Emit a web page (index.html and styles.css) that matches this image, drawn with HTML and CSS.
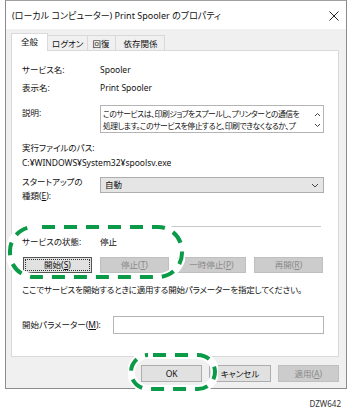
FILE: index.html
```html
<!DOCTYPE html>
<html lang="ja">

<head>
    <meta charset="UTF-8">
    <meta name="viewport" content="width=device-width, initial-scale=1.0">
    <title>Print Spooler のプロパティ</title>
    <link rel="stylesheet" href="styles.css">
</head>

<body>
    <div class="window">
        <!-- タイトルバー -->
        <div class="titlebar">
            <span class="title">(ローカル コンピューター) Print Spooler のプロパティ</span>
            <svg class="close" width="10" height="10" viewBox="0 0 10 10">
                <path d="M0.5 0.5 L9.5 9.5 M9.5 0.5 L0.5 9.5" stroke="#222" stroke-width="1" fill="none" />
            </svg>
        </div>

        <div class="frame">
            <div class="tabs">
                <div class="tab active">全般</div>
                <div class="tab">ログオン</div>
                <div class="tab">回復</div>
                <div class="tab">依存関係</div>
            </div>

            <div class="panel">
                <div class="row r-name">
                    <span class="label">サービス名:</span>
                    <span>Spooler</span>
                </div>
                <div class="row r-display">
                    <span class="label">表示名:</span>
                    <span>Print Spooler</span>
                </div>
                <div class="row r-desc">
                    <span class="label">説明:</span>
                    <div class="desc">
                        <div class="desc-text">このサービスは、印刷ジョブをスプールし、プリンターとの通信を<br>処理します。このサービスを停止すると、印刷できなくなるか、プ</div>
                        <div class="scroll">
                            <svg width="7" height="5" viewBox="0 0 7 5"><path d="M1 4 L3.5 1.5 L6 4" stroke="#444" fill="none" /></svg>
                            <svg width="7" height="5" viewBox="0 0 7 5"><path d="M1 1 L3.5 3.5 L6 1" stroke="#444" fill="none" /></svg>
                        </div>
                    </div>
                </div>
                <div class="row r-path-label">実行ファイルのパス:</div>
                <div class="row r-path">C:¥WINDOWS¥System32¥spoolsv.exe</div>
                <div class="row r-startup">
                    <span class="label">スタートアップの<br>種類(<u>E</u>):</span>
                    <div class="select">
                        <span>自動</span>
                        <svg width="8" height="5" viewBox="0 0 8 5"><path d="M1 1 L4 4 L7 1" stroke="#444" fill="none" /></svg>
                    </div>
                </div>
                <div class="separator"></div>
                <div class="row r-status">
                    <span class="label">サービスの状態:</span>
                    <span>停止</span>
                </div>
                <div class="buttons">
                    <button class="btn focus">開始(<u>S</u>)</button>
                    <button class="btn disabled">停止(<u>T</u>)</button>
                    <button class="btn disabled">一時停止(<u>P</u>)</button>
                    <button class="btn disabled">再開(<u>R</u>)</button>
                </div>
                <div class="row r-hint">ここでサービスを開始するときに適用する開始パラメーターを指定してください。</div>
                <div class="row r-param">
                    <span class="label wide">開始パラメーター(<u>M</u>):</span>
                    <div class="input"></div>
                </div>
            </div>

            <div class="actions">
                <button class="btn">OK</button>
                <button class="btn">キャンセル</button>
                <button class="btn disabled">適用(<u>A</u>)</button>
            </div>
        </div>
    </div>

    <div class="code">DZW642</div>

    <!-- 強調枠 -->
    <svg class="mark mark-status" width="178" height="56" viewBox="0 0 178 56">
        <rect x="3" y="3" width="172" height="50" rx="24" fill="none" stroke="#fff" stroke-width="8" />
        <rect x="3" y="3" width="172" height="50" rx="24" fill="none" stroke="#0b9a47" stroke-width="4" stroke-dasharray="13 9" stroke-dashoffset="-30" />
    </svg>
    <svg class="mark mark-ok" width="90" height="40" viewBox="0 0 90 40">
        <rect x="3" y="3" width="84" height="34" rx="17" fill="none" stroke="#fff" stroke-width="8" />
        <rect x="3" y="3" width="84" height="34" rx="17" fill="none" stroke="#0b9a47" stroke-width="4" stroke-dasharray="13 9" stroke-dashoffset="-5" />
    </svg>
</body>

</html>
```

FILE: styles.css
```css
body {
    margin: 0;
    background: #fff;
    font-family: "Noto Sans", "Noto Sans CJK JP", sans-serif;
    font-size: 8.5px;
    font-feature-settings: "palt";
    color: #111;
    position: relative;
    width: 350px;
    height: 411px;
    overflow: hidden;
}

.window {
    margin-left: 5px;
    width: 340px;
    border: 1px solid #8c8c8c;
    border-top-color: #a0a0a0;
}

.titlebar {
    height: 28px;
    background: #fff;
    display: flex;
    align-items: center;
    padding-left: 6px;
    padding-right: 7px;
}

.title {
    font-size: 9px;
    flex: 1;
}

.close {
    margin-top: 1px;
}

.frame {
    background: #f0f0f0;
    padding: 4px 7px 6px 5px;
}

.tabs {
    display: flex;
    align-items: flex-end;
    height: 17px;
    position: relative;
    z-index: 1;
}

.tab {
    height: 15px;
    line-height: 15px;
    padding: 0 4px;
    white-space: nowrap;
    border: 1px solid #d9d9d9;
    border-bottom: none;
    border-left: none;
    background: #f0f0f0;
    box-sizing: border-box;
}

.tab.active {
    height: 18px;
    line-height: 16px;
    margin-bottom: -1px;
    width: 37px;
    text-align: center;
    background: #fff;
    border-left: 1px solid #d9d9d9;
    padding: 0;
}

.tab:nth-child(3) {
    padding: 0 6px 0 4px;
}

.tab:nth-child(4) {
    padding: 0 7px;
}

.panel {
    background: #fff;
    border: 1px solid #d9d9d9;
    height: 307px;
    box-sizing: border-box;
    padding: 12px 14px 0 10px;
}

.row {
    display: flex;
    line-height: 14px;
}

.label {
    width: 78px;
    flex-shrink: 0;
}

.label.wide {
    width: 91px;
}

.r-display {
    margin-top: 4px;
}

.r-desc {
    margin-top: 10px;
}

.r-desc .label {
    padding-top: 1px;
}

.desc {
    flex: 1;
    height: 28px;
    border: 1px solid #b4b4b4;
    box-sizing: border-box;
    display: flex;
    padding: 2px 0 0 2px;
}

.desc-text {
    flex: 1;
    font-size: 7.8px;
    letter-spacing: -0.45px;
    line-height: 12px;
    white-space: nowrap;
}

.scroll {
    width: 11px;
    display: flex;
    flex-direction: column;
    align-items: center;
    gap: 6px;
    padding-top: 4px;
}

.r-path-label {
    margin-top: 8px;
}

.r-path {
    margin-top: 1px;
}

.r-startup {
    margin-top: 5px;
}

.select {
    flex: 1;
    height: 16px;
    margin-top: 2px;
    background: #e5e5e5;
    border: 1px solid #adadad;
    box-sizing: border-box;
    display: flex;
    align-items: center;
    justify-content: space-between;
    padding: 0 4px 0 4px;
}

.separator {
    margin-top: 23px;
    height: 1px;
    margin-right: 3px;
    background: #c8c8c8;
}

.r-status {
    margin-top: 8px;
}

.buttons {
    display: flex;
    gap: 8px;
    margin-top: 8px;
    margin-left: 1px;
}

.btn {
    font-family: inherit;
    font-size: 8.5px;
    font-feature-settings: "palt";
    width: 69px;
    height: 16px;
    padding: 0;
    background: #e1e1e1;
    border: 1px solid #adadad;
    color: #111;
    line-height: 14px;
}

.btn.focus {
    border: 1px solid #555;
    outline: 1px dotted #333;
    outline-offset: -3px;
}

.btn.disabled {
    background: #cccccc;
    border-color: #bfbfbf;
    color: #8a8a8a;
}

.r-hint {
    margin-top: 10px;
    letter-spacing: -0.2px;
}

.r-param {
    margin-top: 19px;
    align-items: center;
}

.input {
    flex: 1;
    height: 18px;
    border: 1px solid #b4b4b4;
    box-sizing: border-box;
}

.actions {
    display: flex;
    gap: 7px;
    margin-top: 8px;
    padding-left: 130px;
}

.actions .btn {
    width: 63px;
    height: 17px;
}

.code {
    text-align: right;
    padding-right: 9px;
    margin-top: 9px;
    font-size: 8px;
    color: #333;
}

.mark {
    position: absolute;
}

.mark-status {
    left: 7px;
    top: 224px;
}

.mark-ok {
    left: 128px;
    top: 352px;
}
```
